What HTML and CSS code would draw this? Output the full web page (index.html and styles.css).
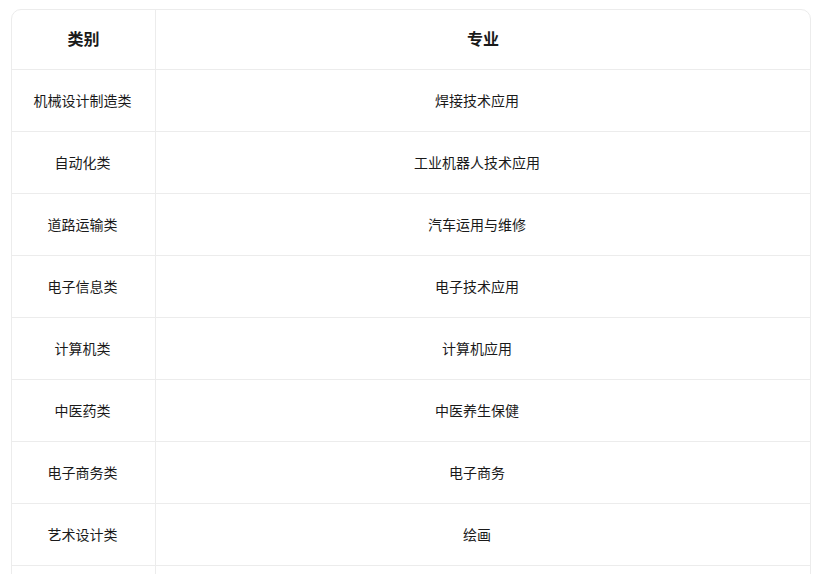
FILE: index.html
```html
<!DOCTYPE html>
<html lang="zh">
<head>
<meta charset="utf-8">
<link rel="stylesheet" href="styles.css">
</head>
<body>
<div class="table">
  <div class="row head"><div class="cell c1">类别</div><div class="cell c2">专业</div></div>
  <div class="row"><div class="cell c1">机械设计制造类</div><div class="cell c2">焊接技术应用</div></div>
  <div class="row"><div class="cell c1">自动化类</div><div class="cell c2">工业机器人技术应用</div></div>
  <div class="row"><div class="cell c1">道路运输类</div><div class="cell c2">汽车运用与维修</div></div>
  <div class="row"><div class="cell c1">电子信息类</div><div class="cell c2">电子技术应用</div></div>
  <div class="row"><div class="cell c1">计算机类</div><div class="cell c2">计算机应用</div></div>
  <div class="row"><div class="cell c1">中医药类</div><div class="cell c2">中医养生保健</div></div>
  <div class="row"><div class="cell c1">电子商务类</div><div class="cell c2">电子商务</div></div>
  <div class="row"><div class="cell c1">艺术设计类</div><div class="cell c2">绘画</div></div>
  <div class="row"><div class="cell c1"></div><div class="cell c2"></div></div>
</div>
</body>
</html>
```
FILE: styles.css
```css
html, body {
  margin: 0;
  padding: 0;
  background: #fff;
  overflow: hidden;
}
body {
  font-family: "Noto Sans CJK SC", "Noto Sans", sans-serif;
  color: #1a1a1a;
}
.table {
  margin: 9px 0 0 11px;
  width: 800px;
  box-sizing: border-box;
  border: 1px solid #ececec;
  border-radius: 10px;
}
.row {
  display: grid;
  grid-template-columns: 144px 1fr;
  height: 62px;
  border-bottom: 1px solid #ececec;
  box-sizing: border-box;
}
.row.head {
  height: 60px;
  font-weight: 700;
}
.cell {
  display: flex;
  align-items: center;
  justify-content: center;
  font-size: 14px;
  padding-bottom: 2px;
  box-sizing: border-box;
}
.c1 {
  border-right: 1px solid #ececec;
  padding-right: 2px;
}
.c2 {
  padding-right: 12px;
}
.head .cell {
  font-size: 16px;
  padding-bottom: 4px;
  padding-right: 0;
}
```
